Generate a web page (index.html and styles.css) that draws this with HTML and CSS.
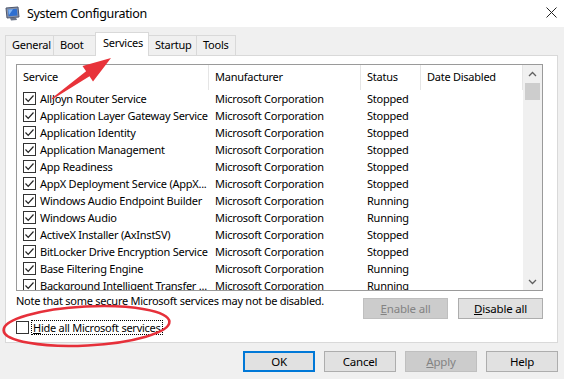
FILE: index.html
```html
<!DOCTYPE html>
<html lang="en">
<head>
  <meta charset="UTF-8">
  <title>System Configuration</title>
  <link rel="stylesheet" href="styles.css">
</head>
<body>
  <div class="window">

    <div class="titlebar">
      <svg class="app-icon" width="16" height="16" viewBox="0 0 16 16">
        <path d="M1 2 L13 1 L14 11 L2 12 Z" fill="#8a93a8" stroke="#4d566c" stroke-width="1"/>
        <path d="M3 3.5 L11.8 2.8 L12.5 9.6 L3.6 10.3 Z" fill="#2f6fd0"/>
        <path d="M3.2 3.6 L8 3.2 L4 9 Z" fill="#7fb2f0"/>
        <path d="M5 12 L11 11.5 L12 14 L6 14.5 Z" fill="#6d768a"/>
      </svg>
      <span class="title">System Configuration</span>
      <svg class="close" width="11" height="11" viewBox="0 0 11 11">
        <path d="M0.5 0.5 L10.5 10.5 M10.5 0.5 L0.5 10.5" stroke="#222" stroke-width="1"/>
      </svg>
    </div>

    <div class="tabs">
      <div class="tab tab-general">General</div>
      <div class="tab tab-boot">Boot</div>
      <div class="tab tab-services active">Services</div>
      <div class="tab tab-startup">Startup</div>
      <div class="tab tab-tools">Tools</div>
    </div>

    <div class="panel">
      <div class="list">
        <div class="list-body">
          <div class="row header">
            <div class="cell">Service</div>
            <div class="cell">Manufacturer</div>
            <div class="cell">Status</div>
            <div class="cell">Date Disabled</div>
          </div>
          <div id="rows"></div>
        </div>
        <div class="scrollbar">
          <svg class="arrow" width="9" height="6" viewBox="0 0 9 6"><path d="M1 5 L4.5 1.5 L8 5" fill="none" stroke="#606060" stroke-width="1.3"/></svg>
          <div class="track"><div class="thumb"></div></div>
          <svg class="arrow" width="9" height="6" viewBox="0 0 9 6"><path d="M1 1 L4.5 4.5 L8 1" fill="none" stroke="#606060" stroke-width="1.3"/></svg>
        </div>
      </div>

      <div class="note-row">
        <span class="note">Note that some secure Microsoft services may not be disabled.</span>
        <div class="btn-group">
          <button class="btn disabled"><u>E</u>nable all</button>
          <button class="btn"><u>D</u>isable all</button>
        </div>
      </div>

      <div class="hide-row">
        <span class="checkbox"></span>
        <span class="hide-label"><u>H</u>ide all Microsoft services</span>
      </div>
    </div>

    <div class="footer">
      <button class="btn wide default">OK</button>
      <button class="btn wide">Cancel</button>
      <button class="btn wide disabled"><u>A</u>pply</button>
      <button class="btn wide">Help</button>
    </div>

    <svg class="annotations" width="564" height="379" viewBox="0 0 564 379">
      <polygon points="51.5,98.5 86.1,71.2 82.5,66 111,58 93,81.5 89.5,76.2 52.5,99.3" fill="#e8333a"/>
      <ellipse cx="86.5" cy="326" rx="83" ry="19.5" transform="rotate(-3 86.5 326)" fill="none" stroke="#e6303a" stroke-width="2.6"/>
    </svg>
  </div>

  <script>
    const services = [
      ["AllJoyn Router Service", "Stopped"],
      ["Application Layer Gateway Service", "Stopped"],
      ["Application Identity", "Stopped"],
      ["Application Management", "Stopped"],
      ["App Readiness", "Stopped"],
      ["AppX Deployment Service (AppX...", "Stopped"],
      ["Windows Audio Endpoint Builder", "Running"],
      ["Windows Audio", "Running"],
      ["ActiveX Installer (AxInstSV)", "Stopped"],
      ["BitLocker Drive Encryption Service", "Stopped"],
      ["Base Filtering Engine", "Running"],
      ["Background Intelligent Transfer ...", "Running"]
    ];

    const rows = document.getElementById("rows");
    services.forEach(s => {
      const row = document.createElement("div");
      row.className = "row";
      row.innerHTML = `
        <div class="cell service"><span class="checkbox checked"></span><span>${s[0]}</span></div>
        <div class="cell">Microsoft Corporation</div>
        <div class="cell">${s[1]}</div>
        <div class="cell"></div>
      `;
      rows.appendChild(row);
    });
  </script>
</body>
</html>
```

FILE: styles.css
```css
body {
  margin: 0;
  background: #f0f0f0;
  color: #000;
  font-family: 'Noto Sans', 'Segoe UI', sans-serif;
  font-size: 11px;
  letter-spacing: -0.25px;
}

.window {
  position: relative;
  width: 564px;
  height: 379px;
  overflow: hidden;
  background: #f0f0f0;
}

.titlebar {
  height: 27px;
  background: #fff;
  display: flex;
  align-items: center;
  padding-left: 5px;
}

.app-icon {
  margin-right: 6px;
}

.title {
  font-size: 12.5px;
  letter-spacing: -0.35px;
  flex: 1;
}

.close {
  margin-right: 7px;
  margin-top: -2px;
}

.tabs {
  height: 28px;
  display: flex;
  align-items: flex-end;
  padding-left: 5px;
}

.tab {
  box-sizing: border-box;
  height: 20px;
  line-height: 18px;
  padding-left: 6px;
  border: 1px solid #d9d9d9;
  border-bottom: none;
  margin-right: -1px;
  background: #f0f0f0;
  white-space: nowrap;
}

.tab.active {
  height: 24px;
  margin-bottom: -1px;
  line-height: 19px;
  background: #fff;
  position: relative;
  z-index: 1;
  padding-left: 7px;
}

.tab-general { width: 49px; }
.tab-boot { width: 43px; }
.tab-services { width: 54px; }
.tab-startup { width: 49px; }
.tab-tools { width: 40px; }

.panel {
  box-sizing: border-box;
  height: 288px;
  margin: 0 6px 0 5px;
  padding: 8px 14px 0 10px;
  background: #fff;
  border: 1px solid #d9d9d9;
}

.list {
  box-sizing: border-box;
  height: 227px;
  border: 1px solid #9a9a9a;
  display: flex;
}

.list-body {
  flex: 1;
  overflow: hidden;
}

.row {
  display: grid;
  grid-template-columns: 192px 152px 60px 1fr;
  height: 17px;
  line-height: 17px;
  white-space: nowrap;
}

.row.header {
  height: 25px;
  line-height: 24px;
}

.cell {
  padding-left: 6px;
  overflow: hidden;
}

.header .cell {
  border-right: 1px solid #e5e5e5;
}

.cell.service {
  display: flex;
  align-items: center;
  gap: 4px;
}

.checkbox {
  box-sizing: border-box;
  flex: none;
  display: inline-block;
  width: 13px;
  height: 13px;
  border: 1px solid #333;
  background: #fff;
}

.checkbox.checked {
  background-image: url("data:image/svg+xml;utf8,<svg xmlns='http://www.w3.org/2000/svg' width='11' height='11'><path d='M1.5 5.5 L4.2 8.3 L9.5 2.5' fill='none' stroke='%23222' stroke-width='1.2'/></svg>");
  background-repeat: no-repeat;
}

.scrollbar {
  width: 19px;
  background: #f0f0f0;
  display: flex;
  flex-direction: column;
  align-items: center;
}

.arrow {
  margin: 6px 0 5px;
}

.track {
  flex: 1;
  width: 100%;
  padding: 1px 2px 0;
  box-sizing: border-box;
}

.thumb {
  height: 17px;
  background: #cdcdcd;
}

.note-row {
  display: flex;
  justify-content: space-between;
  align-items: flex-start;
}

.note {
  padding-top: 2px;
  line-height: 16px;
  white-space: nowrap;
}

.btn-group {
  display: flex;
  gap: 10px;
  margin-top: 7px;
}

.btn {
  box-sizing: border-box;
  height: 21px;
  width: 85px;
  padding: 0;
  font-family: inherit;
  font-size: 11.5px;
  letter-spacing: -0.2px;
  color: #000;
  background: #e1e1e1;
  border: 1px solid #adadad;
  border-radius: 0;
}

.btn.disabled {
  color: #838383;
  background: #cccccc;
  border-color: #bfbfbf;
}

.btn.default {
  border: 2px solid #0078d7;
}

.hide-row {
  display: flex;
  align-items: center;
  gap: 3px;
  margin-top: 1px;
  height: 15px;
}

.hide-label {
  line-height: 13px;
  outline: 1px dotted #000;
  padding: 0 1px;
}

.footer {
  display: flex;
  justify-content: flex-end;
  gap: 9px;
  padding: 8px 6px 0 0;
}

.btn.wide {
  width: 72px;
}

.annotations {
  position: absolute;
  left: 0;
  top: 0;
  pointer-events: none;
}
```
